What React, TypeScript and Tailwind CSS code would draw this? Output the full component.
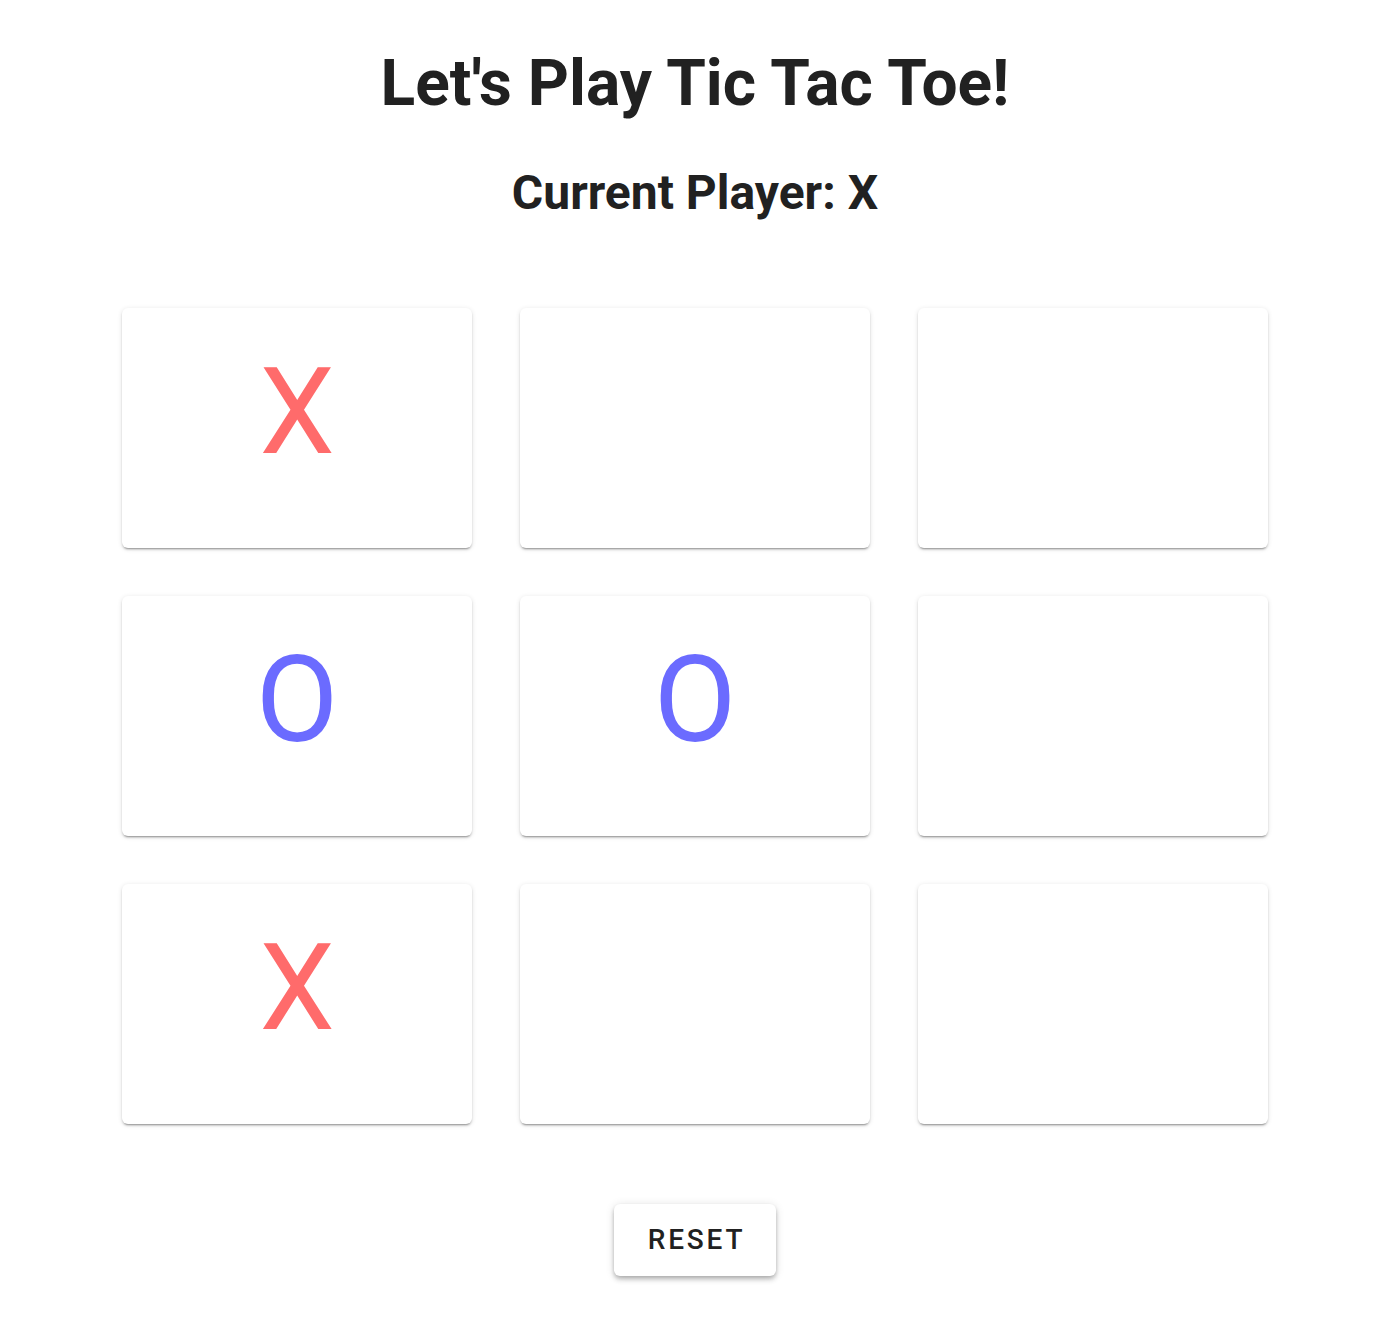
import React from "react";

const cells = ["X", "", "", "O", "O", "", "X", "", ""];

export default function App() {
  return (
    <div className="min-h-screen bg-white pr-[4px] flex flex-col items-center text-[#212121]" style={{ fontFamily: "Roboto, 'Liberation Sans', sans-serif" }}>
      <h1 className="mt-[44px] text-[64px] leading-[80px] font-bold">Let's Play Tic Tac Toe!</h1>
      <h2 className="mt-[40px] text-[48px] leading-[58px] font-bold">Current Player: X</h2>
      <div className="mt-[86px] grid grid-cols-[350px_350px_350px] gap-[48px]">
        {cells.map((c, i) => (
          <div
            key={i}
            className="h-[240px] pb-[32px] rounded-[6px] bg-white flex items-center justify-center shadow-[0_3px_1px_-2px_rgba(0,0,0,0.2),0_2px_2px_0_rgba(0,0,0,0.14),0_1px_5px_0_rgba(0,0,0,0.12)]"
          >
            <span
              className={`text-[120px] leading-none font-normal ${c === "X" ? "text-[#ff6b6b]" : "text-[#6b6bff]"}`}
            >
              {c}
            </span>
          </div>
        ))}
      </div>
      <button className="mt-[80px] w-[162px] h-[72px] pl-[3px] rounded-[6px] bg-white text-[28px] font-medium tracking-[0.1em] text-[#212121] shadow-[0_2px_4px_-1px_rgba(0,0,0,0.2),0_4px_5px_0_rgba(0,0,0,0.14),0_1px_10px_0_rgba(0,0,0,0.12)]">
        RESET
      </button>
    </div>
  );
}
